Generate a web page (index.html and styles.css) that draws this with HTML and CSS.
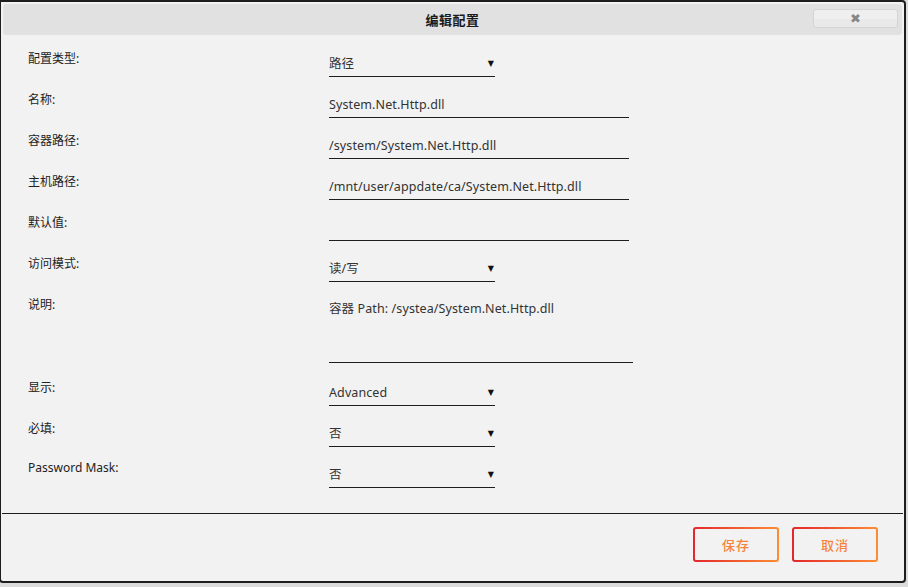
FILE: index.html
```html
<!DOCTYPE html>
<html lang="zh">
<head>
<meta charset="utf-8">
<title>编辑配置</title>
<link rel="stylesheet" href="styles.css">
</head>
<body>
<div class="dialog">
  <div class="titlebar">
    <span class="title">编辑配置</span>
    <button class="close" type="button"><span class="x">✖</span></button>
  </div>
  <div class="form">
    <div class="row">
      <div class="label">配置类型:</div>
      <div class="ctl select"><span>路径</span><span class="arrow">▼</span></div>
    </div>
    <div class="row">
      <div class="label">名称:</div>
      <div class="ctl input">System.Net.Http.dll</div>
    </div>
    <div class="row">
      <div class="label">容器路径:</div>
      <div class="ctl input">/system/System.Net.Http.dll</div>
    </div>
    <div class="row">
      <div class="label">主机路径:</div>
      <div class="ctl input">/mnt/user/appdate/ca/System.Net.Http.dll</div>
    </div>
    <div class="row">
      <div class="label">默认值:</div>
      <div class="ctl input"></div>
    </div>
    <div class="row">
      <div class="label">访问模式:</div>
      <div class="ctl select"><span>读/写</span><span class="arrow">▼</span></div>
    </div>
    <div class="row row-desc">
      <div class="label">说明:</div>
      <div class="ctl textarea">容器 Path: /systea/System.Net.Http.dll</div>
    </div>
    <div class="row">
      <div class="label">显示:</div>
      <div class="ctl select"><span>Advanced</span><span class="arrow">▼</span></div>
    </div>
    <div class="row">
      <div class="label">必填:</div>
      <div class="ctl select"><span>否</span><span class="arrow">▼</span></div>
    </div>
    <div class="row row-last">
      <div class="label">Password Mask:</div>
      <div class="ctl select"><span>否</span><span class="arrow">▼</span></div>
    </div>
  </div>
  <div class="footer">
    <button class="btn" type="button"><span>保存</span></button>
    <button class="btn" type="button"><span>取消</span></button>
  </div>
</div>
</body>
</html>
```

FILE: styles.css
```css
html, body {
  margin: 0;
  padding: 0;
  background: #dcdcdc;
  font-family: "Noto Sans", "Noto Sans CJK SC", sans-serif;
  font-size: 12px;
  color: #222;
}

.dialog {
  box-sizing: border-box;
  width: 907px;
  height: 583px;
  margin-left: -1px;
  background: #f2f2f2;
  border: 2px solid #1e1e1e;
  border-radius: 0 4px 4px 4px;
  display: flex;
  flex-direction: column;
}

.titlebar {
  margin: 2px 2px 0 2px;
  height: 31px;
  background: #e1e1e1;
  border-radius: 3px;
  position: relative;
  display: flex;
  align-items: center;
  justify-content: center;
}

.title {
  font-size: 13px;
  font-weight: 600;
  color: #1a1a1a;
  letter-spacing: 0.5px;
}

.close {
  position: absolute;
  right: 4px;
  top: 5px;
  width: 85px;
  height: 19px;
  box-sizing: border-box;
  border: 1px solid #d4d4d4;
  border-radius: 3px;
  background: linear-gradient(#efefef 50%, #e9e9e9 50%);
  padding: 0;
  display: flex;
  align-items: center;
  justify-content: center;
}

.close .x {
  font-family: "DejaVu Sans", sans-serif;
  font-size: 13px;
  color: #878787;
  line-height: 1;
}

.form {
  padding: 13px 0 0 27px;
  flex: 1;
}

.row {
  display: flex;
  height: 41px;
}

.row-desc {
  height: 83px;
}

.row-last .label {
  margin-top: 1px;
}

.label {
  width: 301px;
  flex: none;
  margin-top: 3px;
  line-height: 16px;
  color: #222;
}

.ctl {
  box-sizing: border-box;
  margin-top: 2px;
  height: 27px;
  padding-top: 6px;
  line-height: 16px;
  border-bottom: 1.5px solid #1e1e1e;
  color: #333;
  font-size: 12.5px;
  letter-spacing: 0.1px;
}

.select {
  width: 166px;
  display: flex;
  justify-content: space-between;
}

.arrow {
  font-family: "DejaVu Sans", sans-serif;
  font-size: 8px;
  color: #111;
  padding-right: 1px;
}

.input {
  width: 300px;
}

.textarea {
  width: 304px;
  height: 67px;
  padding-top: 5px;
}

.footer {
  margin: 0 1px 0 1px;
  border-top: 1.5px solid #1e1e1e;
  padding: 13px 25px 19px 0;
  display: flex;
  justify-content: flex-end;
  gap: 13px;
}

.btn {
  box-sizing: border-box;
  width: 86px;
  height: 35px;
  border: 2px solid transparent;
  border-radius: 3px;
  background:
    linear-gradient(#f2f2f2, #f2f2f2) padding-box,
    linear-gradient(90deg, #e4262c, #fd8d33) border-box;
  font-family: "Noto Sans CJK SC", sans-serif;
  font-size: 13px;
  font-weight: 500;
  color: #f6843b;
  letter-spacing: 1px;
  padding: 0;
}
```
